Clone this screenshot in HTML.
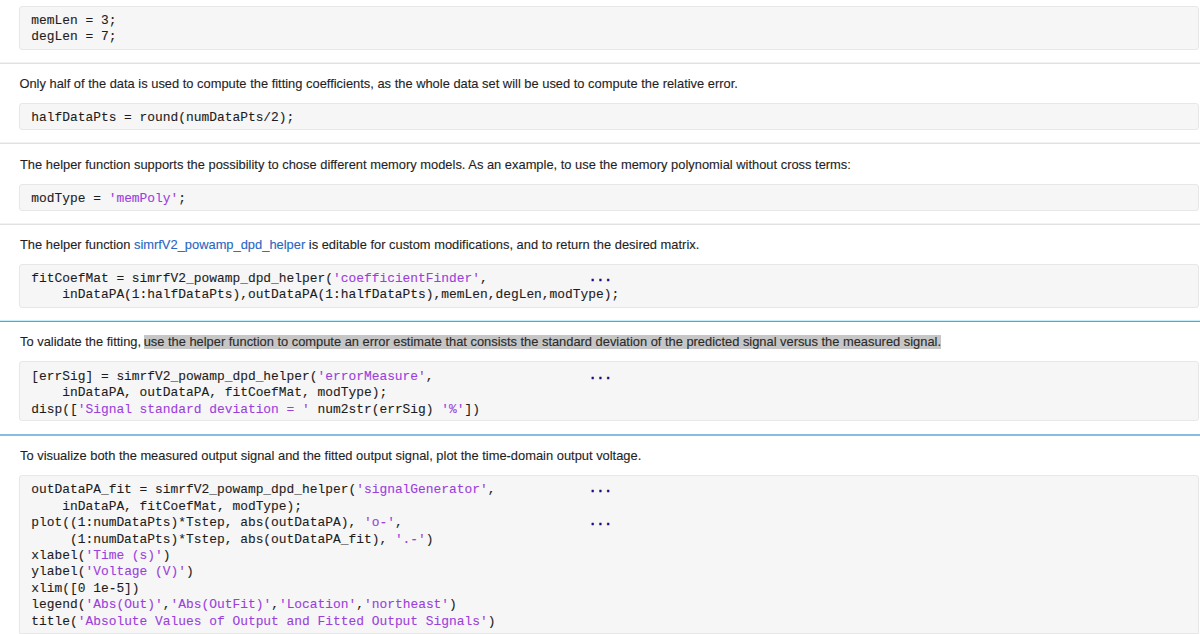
<!DOCTYPE html>
<html><head><meta charset="utf-8">
<style>
html,body{margin:0;padding:0;background:#fff;}
body{width:1200px;height:634px;overflow:hidden;position:relative;}
.box{position:absolute;left:19px;width:1180px;background:#f6f6f6;border:1px solid #e7e7e7;border-radius:3px;box-sizing:border-box;}
.code{position:absolute;left:31.3px;margin:0;font-family:"Liberation Mono",monospace;font-size:12.9px;line-height:16.4px;color:#1c1c1c;white-space:pre;-webkit-text-stroke:0.1px currentColor;}
.s{color:#9b3fdc;}
.k{color:#16007a;-webkit-text-stroke:0.6px #16007a;position:relative;left:0.4px;top:-1px;}
.txt{position:absolute;left:20px;font-family:"Liberation Sans",sans-serif;font-size:12.9px;line-height:15px;color:#1f1f1f;white-space:pre;-webkit-text-stroke:0.12px currentColor;}
.sep{position:absolute;left:0;width:1200px;height:1px;background:#e1e1e1;box-shadow:0 -1px 0 #f2f2f2;}
.blue{position:absolute;left:0;width:1200px;height:2px;background:#86bde3;}
.blue1{position:absolute;left:0;width:1200px;height:1px;background:#5e9fd6;box-shadow:0 -1px 0 #c4ecfa;}
.link{color:#2767c4;}
.hl{background:linear-gradient(to bottom,transparent 1.2px,#c6c6c6 1.2px,#c6c6c6 14.7px,transparent 14.7px);color:#2a2a2a;}
</style></head><body>

<div class="box" style="top:6px;height:44px;"></div>
<pre class="code" style="top:13px;">memLen = 3;
degLen = 7;</pre>

<div class="sep" style="top:63px;"></div>

<div class="txt" style="top:76px;left:19.4px;">Only half of the data is used to compute the fitting coefficients, as the whole data set will be used to compute the relative error.</div>

<div class="box" style="top:103px;height:27px;"></div>
<pre class="code" style="top:110px;">halfDataPts = round(numDataPts/2);</pre>

<div class="sep" style="top:143px;"></div>

<div class="txt" style="top:156.5px;">The helper function supports the possibility to chose different memory models. As an example, to use the memory polynomial without cross terms:</div>

<div class="box" style="top:184px;height:27px;"></div>
<pre class="code" style="top:190.5px;">modType = <span class="s">'memPoly'</span>;</pre>

<div class="sep" style="top:224px;"></div>

<div class="txt" style="top:237px;">The helper function <span class="link">simrfV2_powamp_dpd_helper</span> is editable for custom modifications, and to return the desired matrix.</div>

<div class="box" style="top:264px;height:44px;"></div>
<pre class="code" style="top:271px;">fitCoefMat = simrfV2_powamp_dpd_helper(<span class="s">'coefficientFinder'</span>,             <span class="k">...</span>
    inDataPA(1:halfDataPts),outDataPA(1:halfDataPts),memLen,degLen,modType);</pre>

<div class="blue1" style="top:321px;"></div>

<div class="txt" style="top:334px;">To validate the fitting, <span class="hl" style="margin-left:-1px;letter-spacing:-0.012px">use the helper function to compute an error estimate that consists the standard deviation of the predicted signal versus the measured signal.</span></div>

<div class="box" style="top:361px;height:60px;"></div>
<pre class="code" style="top:369px;">[errSig] = simrfV2_powamp_dpd_helper(<span class="s">'errorMeasure'</span>,                    <span class="k">...</span>
    inDataPA, outDataPA, fitCoefMat, modType);
disp([<span class="s">'Signal standard deviation = '</span> num2str(errSig) <span class="s">'%'</span>])</pre>

<div class="blue" style="top:434px;"></div>

<div class="txt" style="top:448px;">To visualize both the measured output signal and the fitted output signal, plot the time-domain output voltage.</div>

<div class="box" style="top:475px;height:159px;border-bottom-left-radius:0;border-bottom-right-radius:0;"></div>
<pre class="code" style="top:482.3px;">outDataPA_fit = simrfV2_powamp_dpd_helper(<span class="s">'signalGenerator'</span>,            <span class="k">...</span>
    inDataPA, fitCoefMat, modType);
plot((1:numDataPts)*Tstep, abs(outDataPA), <span class="s">'o-'</span>,                        <span class="k">...</span>
     (1:numDataPts)*Tstep, abs(outDataPA_fit), <span class="s">'.-'</span>)
xlabel(<span class="s">'Time (s)'</span>)
ylabel(<span class="s">'Voltage (V)'</span>)
xlim([0 1e-5])
legend(<span class="s">'Abs(Out)'</span>,<span class="s">'Abs(OutFit)'</span>,<span class="s">'Location'</span>,<span class="s">'northeast'</span>)
title(<span class="s">'Absolute Values of Output and Fitted Output Signals'</span>)</pre>

</body></html>
